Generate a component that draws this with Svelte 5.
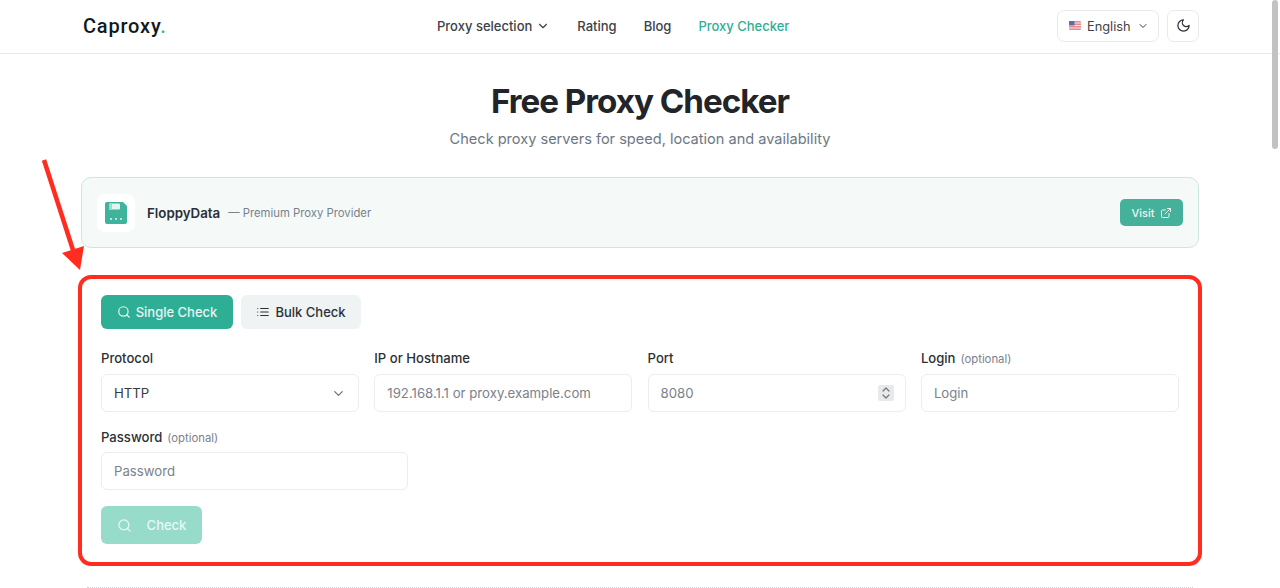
<script>
    const fields = [
        { label: 'IP or Hostname', placeholder: '192.168.1.1 or proxy.example.com' },
        { label: 'Port', placeholder: '8080', spin: true },
        { label: 'Login', optional: true, placeholder: 'Login' }
    ];
    const nav = ['Rating', 'Blog'];
</script>

{#snippet search(size)}
    <svg width={size} height={size} viewBox="0 0 24 24" fill="none" stroke="currentColor" stroke-width="2" stroke-linecap="round" stroke-linejoin="round">
        <circle cx="11" cy="11" r="8" />
        <path d="m21 21-4.3-4.3" />
    </svg>
{/snippet}

{#snippet chevron(size, color)}
    <svg width={size} height={size} viewBox="0 0 24 24" fill="none" stroke={color} stroke-width="2" stroke-linecap="round" stroke-linejoin="round">
        <path d="m6 9 6 6 6-6" />
    </svg>
{/snippet}

<div class="page">
    <header class="topbar">
        <div class="topbar-inner">
            <a class="logo" href="#top">Caproxy<span>.</span></a>
            <nav class="nav">
                <span class="nav-item">Proxy selection {@render chevron(14, '#3b424a')}</span>
                {#each nav as item}
                    <span class="nav-item">{item}</span>
                {/each}
                <span class="nav-item active">Proxy Checker</span>
            </nav>
            <div class="actions">
                <button class="lang">
                    <svg width="12" height="9" viewBox="0 0 12 9">
                        <rect width="12" height="9" rx="1" fill="#e98a8f" />
                        <path d="M0 2h12M0 4.5h12M0 7h12" stroke="#f6e4e5" stroke-width="1" />
                        <rect width="5.5" height="4.5" fill="#5a6fa8" />
                    </svg>
                    <span class="lang-name">English</span>
                    {@render chevron(12, '#3b424a')}
                </button>
                <button class="theme" aria-label="Theme">
                    <svg width="15" height="15" viewBox="0 0 24 24" fill="none" stroke="#2d3238" stroke-width="2" stroke-linecap="round" stroke-linejoin="round">
                        <path d="M12 3a6 6 0 0 0 9 9 9 9 0 1 1-9-9Z" />
                    </svg>
                </button>
            </div>
        </div>
    </header>

    <main class="content">
        <h1>Free Proxy Checker</h1>
        <p class="subtitle">Check proxy servers for speed, location and availability</p>

        <div class="promo">
            <div class="promo-icon">
                <svg width="22" height="22" viewBox="0 0 22 22">
                    <path d="M2 0h16l4 4v16a2 2 0 0 1-2 2H2a2 2 0 0 1-2-2V2a2 2 0 0 1 2-2Z" fill="#3fb39b" />
                    <rect x="4" y="1.5" width="11" height="6" rx="1" fill="#e3f4f0" />
                    <rect x="4" y="1.5" width="3" height="6" fill="#9fdccf" />
                    <circle cx="6" cy="17" r="1" fill="#e3f4f0" />
                    <circle cx="11" cy="17" r="1" fill="#e3f4f0" />
                    <circle cx="16" cy="17" r="1" fill="#e3f4f0" />
                </svg>
            </div>
            <strong>FloppyData</strong>
            <span class="promo-note">— Premium Proxy Provider</span>
            <button class="visit">
                Visit
                <svg width="12" height="12" viewBox="0 0 24 24" fill="none" stroke="currentColor" stroke-width="2" stroke-linecap="round" stroke-linejoin="round">
                    <path d="M18 13v6a2 2 0 0 1-2 2H5a2 2 0 0 1-2-2V8a2 2 0 0 1 2-2h6" />
                    <path d="M15 3h6v6" />
                    <path d="M10 14 21 3" />
                </svg>
            </button>
        </div>

        <section class="checker">
            <div class="tabs">
                <button class="tab tab-on">{@render search(14)} Single Check</button>
                <button class="tab">
                    <svg width="14" height="14" viewBox="0 0 24 24" fill="none" stroke="currentColor" stroke-width="2" stroke-linecap="round" stroke-linejoin="round">
                        <path d="M8 6h13M8 12h13M8 18h13M3 6h.01M3 12h.01M3 18h.01" />
                    </svg>
                    Bulk Check
                </button>
            </div>

            <div class="grid">
                <div class="field">
                    <span class="label">Protocol</span>
                    <div class="input">
                        <span class="value">HTTP</span>
                        {@render chevron(15, '#6b7280')}
                    </div>
                </div>
                {#each fields as f}
                    <div class="field">
                        <span class="label">{f.label}{#if f.optional}<small>(optional)</small>{/if}</span>
                        <div class="input">
                            <span class="hint">{f.placeholder}</span>
                            {#if f.spin}
                                <span class="spin">
                                    <svg width="10" height="14" viewBox="0 0 10 14" fill="none" stroke="#6f7780" stroke-width="1.2" stroke-linecap="round" stroke-linejoin="round">
                                        <path d="m2 5 3-3 3 3M2 9l3 3 3-3" />
                                    </svg>
                                </span>
                            {/if}
                        </div>
                    </div>
                {/each}
            </div>

            <div class="field password">
                <span class="label">Password<small>(optional)</small></span>
                <div class="input"><span class="hint">Password</span></div>
            </div>

            <button class="check">{@render search(15)} Check</button>
        </section>

        <div class="divider"></div>
    </main>

    <!-- annotation and scrollbar sit over the page -->
    <svg class="arrow" width="60" height="120" viewBox="0 0 60 120">
        <path d="M4 2 33 92" stroke="#ff2d20" stroke-width="4.5" fill="none" />
        <path d="M22 95 44 88 40 112Z" fill="#ff2d20" />
    </svg>
    <div class="scrollbar"></div>
</div>

<style>
    :global(body) {
        margin: 0;
        background: #fff;
    }

    .page {
        position: relative;
        height: 588px;
        overflow: hidden;
        font-family: Inter, "Liberation Sans", sans-serif;
        color: #212529;
    }

    button {
        font-family: inherit;
        cursor: pointer;
    }

    .topbar {
        height: 53px;
        border-bottom: 1px solid #e6e8ea;
    }

    .topbar-inner {
        width: 1118px;
        height: 100%;
        box-sizing: border-box;
        padding-bottom: 2px;
        margin: 0 auto;
        display: flex;
        align-items: center;
    }

    .logo {
        width: 354px;
        margin-left: 2px;
        font-family: Roboto, sans-serif;
        font-size: 20px;
        font-weight: 500;
        letter-spacing: 0.8px;
        color: #15181b;
        text-decoration: none;
    }

    .logo span {
        color: #35b8a6;
    }

    .nav {
        display: flex;
        align-items: center;
        gap: 27px;
        font-size: 13px;
        font-weight: 500;
        color: #3b424a;
    }

    .nav-item {
        display: flex;
        align-items: center;
        gap: 4px;
    }

    .active {
        color: #2fae96;
    }

    .actions {
        margin-left: auto;
        display: flex;
        gap: 8px;
    }

    .lang,
    .theme {
        height: 32px;
        background: #fff;
        border: 1px solid #e8eaec;
        border-radius: 7px;
        display: flex;
        align-items: center;
        color: #3b424a;
    }

    .lang {
        width: 102px;
        padding: 0 0 0 11px;
        gap: 6px;
        font-size: 12.8px;
    }

    .lang-name {
        margin-top: 1px;
    }

    .theme {
        width: 32px;
        justify-content: center;
        padding: 0;
    }

    .content {
        width: 1118px;
        margin: 0 auto;
    }

    h1 {
        margin: 27px 0 0;
        text-align: center;
        font-size: 33.2px;
        line-height: 41px;
        font-weight: 700;
        letter-spacing: -1px;
        color: #212529;
    }

    .subtitle {
        margin: 7px 0 0;
        text-align: center;
        font-size: 14.55px;
        line-height: 20px;
        color: #6c7785;
    }

    .promo {
        margin-top: 28px;
        height: 71px;
        box-sizing: border-box;
        display: flex;
        align-items: center;
        padding: 0 15px;
        background: #f5f9f8;
        border: 1px solid #cbe8e0;
        border-radius: 10px;
    }

    .promo-icon {
        width: 38px;
        height: 38px;
        background: #fff;
        border-radius: 8px;
        display: flex;
        align-items: center;
        justify-content: center;
        margin-right: 12px;
    }

    .promo strong {
        margin-top: 1px;
        font-size: 13.3px;
        font-weight: 600;
        color: #2b3036;
    }

    .promo-note {
        margin-top: 1px;
        margin-left: 8px;
        font-size: 11.3px;
        color: #78828d;
    }

    .visit {
        margin-left: auto;
        width: 63px;
        height: 27px;
        border: 0;
        border-radius: 5px;
        background: #45b19b;
        color: #e8f6f3;
        font-size: 11px;
        font-weight: 500;
        display: flex;
        align-items: center;
        justify-content: center;
        gap: 5px;
        padding: 0;
    }

    .checker {
        margin: 27px -3px 0;
        height: 291px;
        box-sizing: border-box;
        padding: 16px 19px 0;
        border: 4px solid #ff2d20;
        border-radius: 13px;
    }

    .tabs {
        display: flex;
        gap: 8px;
    }

    .tab {
        height: 34px;
        padding: 0;
        width: 120px;
        border: 0;
        border-radius: 6px;
        background: #eff3f3;
        color: #2b3036;
        font-size: 13px;
        font-weight: 500;
        display: flex;
        align-items: center;
        justify-content: center;
        gap: 5px;
    }

    .tab-on {
        width: 132px;
        background: #2fae96;
        color: #e6f6f2;
    }

    .grid {
        margin-top: 21px;
        display: grid;
        grid-template-columns: repeat(4, 258px);
        column-gap: 15.3px;
    }

    .field {
        display: flex;
        flex-direction: column;
        gap: 8px;
    }

    .label {
        height: 16px;
        font-size: 13.1px;
        line-height: 16px;
        font-weight: 500;
        color: #2b3036;
    }

    .label small {
        margin-left: 5px;
        font-size: 11.3px;
        line-height: 1;
        font-weight: 400;
        color: #78828d;
    }

    .input {
        height: 38px;
        box-sizing: border-box;
        padding: 0 12px;
        display: flex;
        align-items: center;
        justify-content: space-between;
        border: 1px solid #ebedef;
        border-radius: 6px;
        font-size: 13.2px;
        background: #fff;
    }

    .value {
        color: #343a40;
    }

    .hint {
        color: #7a828b;
    }

    .spin {
        width: 16px;
        height: 16px;
        background: #e8e9eb;
        border-radius: 2px;
        display: flex;
        align-items: center;
        justify-content: center;
        margin-right: -1px;
    }

    .password {
        width: 307px;
        gap: 7px;
        margin-top: 17px;
    }

    .check {
        margin-top: 16px;
        width: 101px;
        height: 38px;
        border: 0;
        border-radius: 6px;
        background: #97dbcb;
        color: #e9f8f4;
        font-size: 13px;
        font-weight: 500;
        display: flex;
        align-items: center;
        justify-content: center;
        gap: 15px;
        padding: 0;
    }

    .divider {
        margin: 21px 6px 0;
        border-top: 1px dotted #cfd3d6;
    }

    .arrow {
        position: absolute;
        left: 40px;
        top: 158px;
    }

    .scrollbar {
        position: absolute;
        left: 1272px;
        top: 0;
        width: 6px;
        height: 149px;
        border-radius: 3px;
        background: #c2c2c2;
    }
</style>
